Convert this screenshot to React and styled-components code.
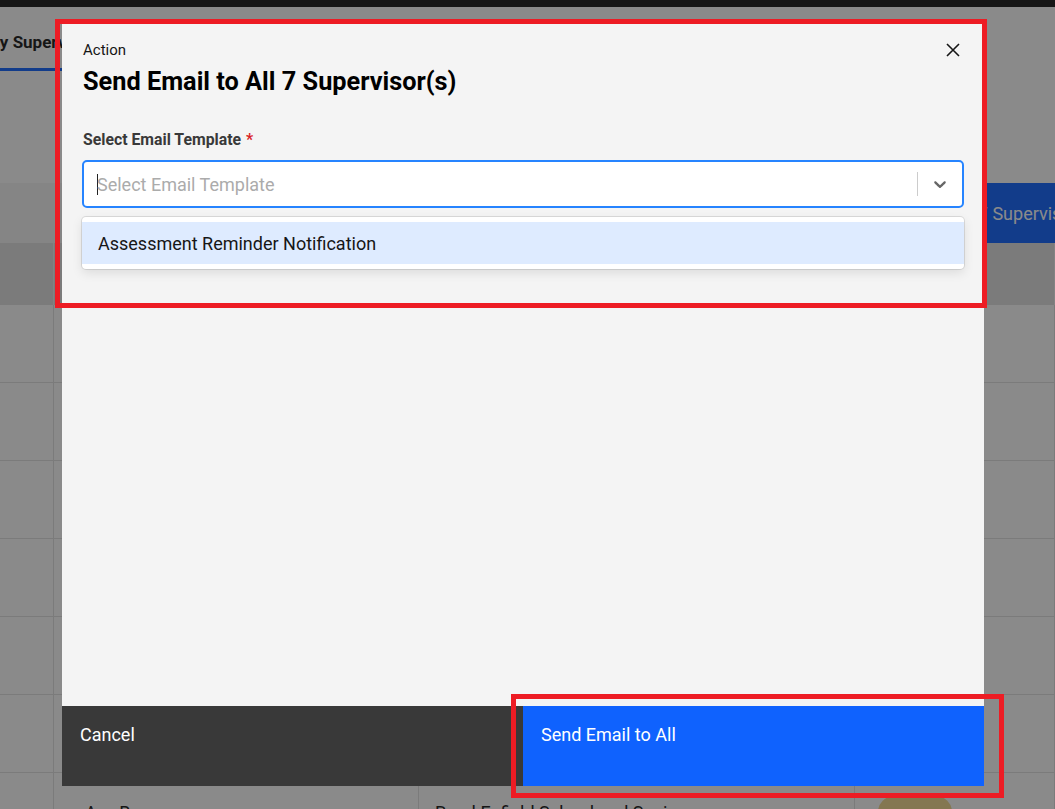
import React from "react";
import styled, { createGlobalStyle } from "styled-components";

const GlobalStyle = createGlobalStyle`
  html, body {
    margin: 0;
    padding: 0;
    height: 100%;
    overflow: hidden;
  }
  body {
    font-family: Roboto, "Noto Sans", "Liberation Sans", Arial, sans-serif;
    color: #161616;
    background: #fff;
  }
  * {
    box-sizing: border-box;
  }
`;

const rows = [
    { name: "", school: "", status: false },
    { name: "", school: "", status: false },
    { name: "", school: "", status: false },
    { name: "", school: "", status: false },
    { name: "", school: "", status: false },
    { name: "", school: "", status: false },
    { name: "Ava Brown", school: "Rural Enfield School and Senior", status: true },
];

const App = () => {
    return (
        <>
            <GlobalStyle />
            {/* ---------------- page behind the modal ---------------- */}
            <StPage>
                <StTopBar />
                <StTabs>
                    <StTab>By Supervisor</StTab>
                </StTabs>
                <StToolbar>
                    <StToolbarBtn>Email All 7 Supervisors</StToolbarBtn>
                </StToolbar>
                <StTableHead>
                    <StHeadCell />
                    <StHeadCell />
                    <StHeadCell />
                    <StHeadCell />
                </StTableHead>
                {rows.map((row, i) => (
                    <StRow key={i}>
                        <StCell />
                        <StCell $indent>{row.name}</StCell>
                        <StCell>{row.school}</StCell>
                        <StCell>{row.status && <StTag />}</StCell>
                    </StRow>
                ))}
            </StPage>

            {/* ---------------- modal ---------------- */}
            <StOverlay>
                <StModal>
                    <StHeader>
                        <StEyebrow>Action</StEyebrow>
                        <StTitle>Send Email to All 7 Supervisor(s)</StTitle>
                        <StCloseBtn aria-label="Close">
                            <svg width="14" height="14" viewBox="0 0 14 14">
                                <path d="M1 1 L13 13 M13 1 L1 13" stroke="#161616" strokeWidth="1.6" fill="none" />
                            </svg>
                        </StCloseBtn>
                    </StHeader>
                    <StBody>
                        <StFieldLabel>
                            Select Email Template<StRequired>*</StRequired>
                        </StFieldLabel>
                        <StControl>
                            <StValue>
                                <StCaret />
                                Select Email Template
                            </StValue>
                            <StSeparator />
                            <StIndicator>
                                <svg width="20" height="20" viewBox="0 0 20 20" fill="#666">
                                    <path d="M4.516 7.548c0.436-0.446 1.043-0.481 1.576 0l3.908 3.747 3.908-3.747c0.533-0.481 1.141-0.446 1.574 0 0.436 0.445 0.408 1.197 0 1.615-0.406 0.418-4.695 4.502-4.695 4.502-0.217 0.223-0.502 0.335-0.787 0.335s-0.57-0.112-0.789-0.335c0 0-4.287-4.084-4.695-4.502s-0.436-1.17 0-1.615z" />
                                </svg>
                            </StIndicator>
                        </StControl>
                        <StMenu>
                            <StOption $focused>Assessment Reminder Notification</StOption>
                        </StMenu>
                    </StBody>
                    <StFooter>
                        <StFooterBtn $kind="secondary">Cancel</StFooterBtn>
                        <StFooterBtn $kind="primary">Send Email to All</StFooterBtn>
                    </StFooter>
                </StModal>
            </StOverlay>

            {/* ---------------- red annotation boxes ---------------- */}
            <StMark $x={55} $y={19} $w={932} $h={289} />
            <StMark $x={511} $y={694} $w={493} $h={104} />
        </>
    );
};

export default App;

const StPage = styled.div`
    width: 100%;
    height: 100vh;
    overflow: hidden;
    background: #fff;
`;
const StTopBar = styled.div`
    height: 7px;
    background: #161616;
`;
const StTabs = styled.div`
    display: flex;
    height: 64px;
`;
const StTab = styled.div`
    display: flex;
    align-items: center;
    margin-left: -11px;
    padding: 9px 40px 0 0;
    border-bottom: 3px solid #0f62fe;
    font-size: 17px;
    font-weight: 700;
    color: #161616;
    white-space: nowrap;
`;
const StToolbar = styled.div`
    display: flex;
    justify-content: flex-end;
    height: 60px;
    margin-top: 112px;
    background: #f4f4f4;
    overflow: hidden;
`;
const StToolbarBtn = styled.button`
    flex-shrink: 0;
    margin-right: -48px;
    padding: 0 16px;
    border: none;
    background: #0f62fe;
    color: #fff;
    font-family: inherit;
    font-size: 18px;
    white-space: nowrap;
`;
const StTableHead = styled.div`
    display: grid;
    grid-template-columns: 54px 365px 436px 1fr;
    height: 62px;
    background: #e0e0e0;
`;
const StHeadCell = styled.div`
    border-right: 1px solid #f0f0f0;
`;
const StRow = styled.div`
    display: grid;
    grid-template-columns: 54px 365px 436px 1fr;
    height: 78px;
    border-bottom: 1px solid #e0e0e0;
`;
const StCell = styled.div`
    padding: 29px 16px 0 ${(p) => (p.$indent ? "31px" : "16px")};
    border-right: 1px solid #e0e0e0;
    font-size: 18px;
    line-height: 22px;
    color: #161616;
    white-space: nowrap;
    overflow: hidden;
`;
const StTag = styled.div`
    width: 74px;
    height: 32px;
    margin: -6px 0 0 7px;
    border-radius: 16px;
    background: #f2d98c;
`;

const StOverlay = styled.div`
    position: fixed;
    inset: 0;
    display: flex;
    align-items: center;
    padding-left: 62px;
    background: rgba(22, 22, 22, 0.5);
`;
const StModal = styled.div`
    position: relative;
    display: flex;
    flex-direction: column;
    width: 922px;
    height: 763px;
    background: #f4f4f4;
`;
const StHeader = styled.div`
    padding: 18px 20px 0 21px;
`;
const StEyebrow = styled.div`
    font-size: 15px;
    line-height: 18px;
    color: #161616;
`;
const StTitle = styled.h2`
    margin: 6px 0 0;
    font-size: 25.3px;
    line-height: 34px;
    font-weight: 700;
    color: #000;
`;
const StCloseBtn = styled.button`
    position: absolute;
    top: 11px;
    right: 15px;
    display: flex;
    align-items: center;
    justify-content: center;
    width: 32px;
    height: 32px;
    padding: 0;
    border: none;
    background: transparent;
`;
const StBody = styled.div`
    flex: 1;
    padding: 32px 20px 0;
`;
const StFieldLabel = styled.div`
    margin-bottom: 11px;
    padding-left: 1px;
    font-size: 15.8px;
    line-height: 18px;
    font-weight: 700;
    color: #393939;
`;
const StRequired = styled.span`
    margin-left: 5px;
    color: #da1e28;
`;
const StControl = styled.div`
    display: flex;
    align-items: center;
    height: 48px;
    border: 2px solid #2684ff;
    border-radius: 5px;
    background: #fff;
`;
const StValue = styled.div`
    flex: 1;
    display: flex;
    align-items: center;
    padding-left: 13px;
    font-size: 18px;
    color: #ababab;
`;
const StCaret = styled.span`
    display: inline-block;
    width: 1px;
    height: 21px;
    margin-right: -1px;
    background: #222;
`;
const StSeparator = styled.span`
    width: 1px;
    height: 24px;
    background: #ccc;
`;
const StIndicator = styled.div`
    display: flex;
    align-items: center;
    padding: 0 12px;
`;
const StMenu = styled.div`
    margin-top: 9px;
    padding: 5px 0;
    border-radius: 4px;
    background: #fff;
    box-shadow: 0 0 0 1px rgba(0, 0, 0, 0.1), 0 4px 11px rgba(0, 0, 0, 0.1);
`;
const StOption = styled.div`
    display: flex;
    align-items: center;
    height: 42px;
    padding: 0 16px;
    background: ${(p) => (p.$focused ? "#deebff" : "transparent")};
    font-size: 18px;
    color: #161616;
`;
const StFooter = styled.div`
    display: grid;
    grid-template-columns: 1fr 1fr;
    height: 80px;
`;
const StFooterBtn = styled.button`
    display: flex;
    align-items: flex-start;
    padding: 18px 18px;
    border: none;
    background: ${(p) => (p.$kind === "primary" ? "#0f62fe" : "#393939")};
    color: #fff;
    font-family: inherit;
    font-size: 18px;
    line-height: 22px;
    text-align: left;
`;
const StMark = styled.div`
    position: fixed;
    left: ${(p) => p.$x}px;
    top: ${(p) => p.$y}px;
    width: ${(p) => p.$w}px;
    height: ${(p) => p.$h}px;
    border: 5px solid #ed1c24;
    pointer-events: none;
`;
